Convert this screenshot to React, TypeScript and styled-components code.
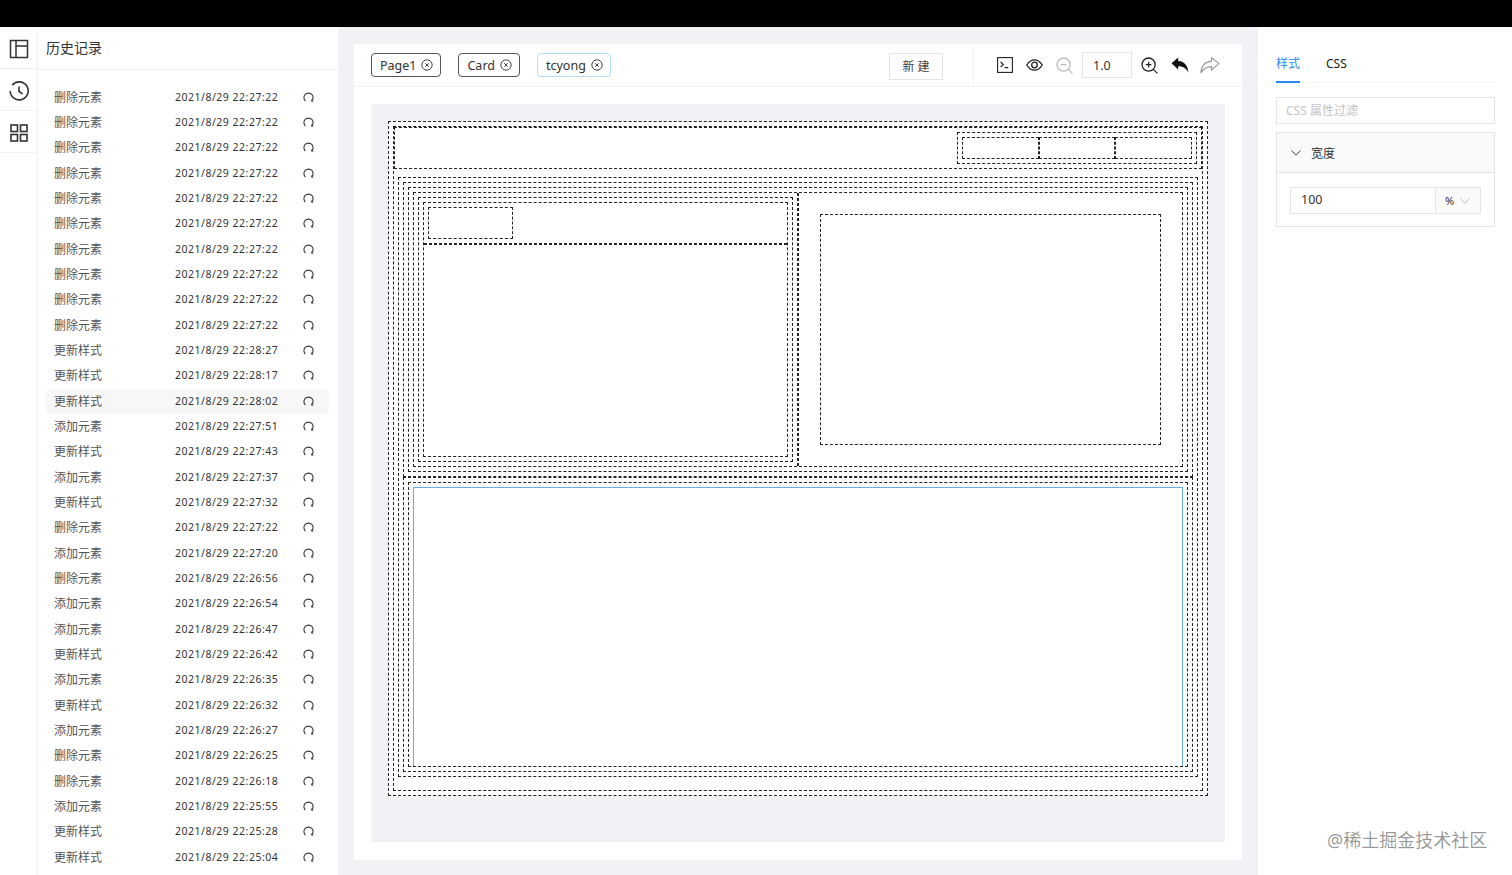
import React from 'react'
import styled, { createGlobalStyle } from 'styled-components'

const history: [string, string][] = [
  ...Array.from({ length: 10 }, (): [string, string] => ['删除元素', '22:27:22']),
  ['更新样式', '22:28:27'],
  ['更新样式', '22:28:17'],
  ['更新样式', '22:28:02'],
  ['添加元素', '22:27:51'],
  ['更新样式', '22:27:43'],
  ['添加元素', '22:27:37'],
  ['更新样式', '22:27:32'],
  ['删除元素', '22:27:22'],
  ['添加元素', '22:27:20'],
  ['删除元素', '22:26:56'],
  ['添加元素', '22:26:54'],
  ['添加元素', '22:26:47'],
  ['更新样式', '22:26:42'],
  ['添加元素', '22:26:35'],
  ['更新样式', '22:26:32'],
  ['添加元素', '22:26:27'],
  ['删除元素', '22:26:25'],
  ['删除元素', '22:26:18'],
  ['添加元素', '22:25:55'],
  ['更新样式', '22:25:28'],
  ['更新样式', '22:25:04'],
]

const LayoutIcon = () => (
  <svg width="20" height="20" viewBox="0 0 20 20" fill="none" stroke="#333" strokeWidth="1.5">
    <rect x="1.5" y="1.5" width="17" height="17" />
    <path d="M7 1.5v17M7 7h11.5" />
  </svg>
)

const ClockIcon = () => (
  <svg width="20" height="20" viewBox="0 0 20 20" fill="none" stroke="#333" strokeWidth="1.6">
    <path d="M3.2 4.2A9 9 0 1 1 1.2 10" />
    <path d="M10 5.5v5l3.6 2.4" />
  </svg>
)

const GridIcon = () => (
  <svg width="18" height="18" viewBox="0 0 18 18" fill="none" stroke="#333" strokeWidth="1.6">
    <rect x="1" y="1" width="6.5" height="6.5" />
    <rect x="10.5" y="1" width="6.5" height="6.5" />
    <rect x="1" y="10.5" width="6.5" height="6.5" />
    <rect x="10.5" y="10.5" width="6.5" height="6.5" />
  </svg>
)

const RestoreIcon = () => (
  <svg width="11" height="12" viewBox="0 0 12 12" fill="none" stroke="#333" strokeWidth="1.2">
    <path d="M2.6 10.4A5 5 0 1 1 9.4 10.4" />
    <path d="M9.5 8.6v2h1.8" strokeWidth="0.9" />
  </svg>
)

const CloseIcon = () => (
  <svg width="12" height="12" viewBox="0 0 13 13" fill="none" stroke="#333" strokeWidth="1">
    <circle cx="6.5" cy="6.5" r="5.6" />
    <path d="M4.6 4.6l3.8 3.8M8.4 4.6l-3.8 3.8" />
  </svg>
)

const TerminalIcon = () => (
  <svg width="16" height="16" viewBox="0 0 16 16" fill="none" stroke="#222" strokeWidth="1.1">
    <rect x="0.6" y="0.6" width="14.8" height="14.8" />
    <path d="M3.6 5l2.8 2.5-2.8 2.5M7.6 10.6h3.6" />
  </svg>
)

const EyeIcon = () => (
  <svg width="17" height="12" viewBox="0 0 17 12" fill="none" stroke="#222" strokeWidth="1.3">
    <path d="M0.8 6C3 2.4 5.6 0.8 8.5 0.8S14 2.4 16.2 6C14 9.6 11.4 11.2 8.5 11.2S3 9.6 0.8 6Z" />
    <circle cx="8.5" cy="6" r="2.8" />
  </svg>
)

const ZoomIcon = ({ plus, color }: { plus?: boolean; color: string }) => (
  <svg width="17" height="17" viewBox="0 0 17 17" fill="none" stroke={color} strokeWidth="1.3">
    <circle cx="7.6" cy="7.6" r="6.6" />
    <path d="M12.4 12.4l4 4M4.8 7.6h5.6" />
    {plus && <path d="M7.6 4.8v5.6" />}
  </svg>
)

const UndoIcon = () => (
  <svg width="18" height="16" viewBox="0 0 18 16" fill="#111">
    <path d="M0.5 6.2L7.2 0.6V4C13 4.2 16.6 8 17.4 15.4C15.2 11.2 12 9.2 7.2 9.2V12.4Z" />
  </svg>
)

const RedoIcon = () => (
  <svg width="20" height="17" viewBox="0 0 20 17" fill="none" stroke="#999" strokeWidth="1.1">
    <path d="M19 6.6L11.6 0.8V4.4C5.4 4.6 1.4 8.6 0.8 16C3.2 11.6 6.6 9.6 11.6 9.6V13Z" />
  </svg>
)

const ChevronIcon = ({ color }: { color: string }) => (
  <svg width="10" height="6" viewBox="0 0 10 6" fill="none" stroke={color} strokeWidth="1">
    <path d="M0.6 0.6L5 5.2L9.4 0.6" />
  </svg>
)

const App = () => {
  return (
    <>
      <GlobalStyle />
      <Page>
        <TopBar />
        <Content>
          <Rail>
            <RailItem><LayoutIcon /></RailItem>
            <RailItem><ClockIcon /></RailItem>
            <RailItem><GridIcon /></RailItem>
          </Rail>
          <HistoryPanel>
            <HistoryTitle>历史记录</HistoryTitle>
            <HistoryList>
              {history.map(([name, time], i) => (
                <HistoryRow key={i} $active={i === 12}>
                  <span>{name}</span>
                  <HistoryTime>2021/8/29 {time}</HistoryTime>
                  <RestoreIcon />
                </HistoryRow>
              ))}
            </HistoryList>
          </HistoryPanel>
          <Main>
            <Editor>
              <Toolbar>
                <PageTab>Page1<CloseIcon /></PageTab>
                <PageTab>Card<CloseIcon /></PageTab>
                <PageTab $active>tcyong<CloseIcon /></PageTab>
                <Spacer />
                <NewButton>新 建</NewButton>
                <ToolGroup>
                  <TerminalIcon />
                  <EyeIcon />
                  <ZoomIcon color="#bbb" />
                  <ScaleInput>1.0</ScaleInput>
                  <ZoomIcon plus color="#222" />
                  <UndoIcon />
                  <RedoSlot><RedoIcon /></RedoSlot>
                </ToolGroup>
              </Toolbar>
              <CanvasArea>
                <OuterFrame>
                  <PageFrame>
                    <HeaderFrame>
                      <HeaderGroup>
                        <HeaderCell />
                        <HeaderCell />
                        <HeaderCell />
                      </HeaderGroup>
                    </HeaderFrame>
                    <BodyFrame>
                      <SectionFrame>
                        <SectionInner>
                          <ColumnRow>
                            <LeftColumn>
                              <CardOuter>
                                <Card>
                                  <CardHead><CardTitle /></CardHead>
                                  <CardBody />
                                </Card>
                              </CardOuter>
                            </LeftColumn>
                            <RightColumn><RightBlock /></RightColumn>
                          </ColumnRow>
                        </SectionInner>
                      </SectionFrame>
                      <SectionFrame>
                        <LastInner><SelectedBlock /></LastInner>
                      </SectionFrame>
                    </BodyFrame>
                  </PageFrame>
                </OuterFrame>
              </CanvasArea>
            </Editor>
          </Main>
          <SidePanel>
            <SideTabs>
              <SideTab $active>样式</SideTab>
              <SideTab>CSS</SideTab>
            </SideTabs>
            <FilterBox>CSS 属性过滤</FilterBox>
            <Collapse>
              <CollapseHead><ChevronIcon color="#444" />宽度</CollapseHead>
              <CollapseBody>
                <ValueField>
                  <ValueText>100</ValueText>
                  <UnitSelect>%<ChevronIcon color="#bbb" /></UnitSelect>
                </ValueField>
              </CollapseBody>
            </Collapse>
          </SidePanel>
        </Content>
        <Watermark>@稀土掘金技术社区</Watermark>
      </Page>
    </>
  )
}

export default App

const GlobalStyle = createGlobalStyle`
  html, body {
    margin: 0;
    padding: 0;
    overflow: hidden;
  }
  * {
    box-sizing: border-box;
  }
`
const Page = styled.div`
  position: relative;
  width: 1512px;
  height: 875px;
  overflow: hidden;
  background-color: #fff;
  font-family: "Noto Sans", "Noto Sans CJK SC", sans-serif;
  color: #333;
`
const TopBar = styled.div`
  height: 27px;
  background-color: #000;
`
const Content = styled.div`
  height: 848px;
  display: flex;
`
const Rail = styled.div`
  width: 38px;
  flex-shrink: 0;
  border-right: 1px solid #f0f0f0;
`
const RailItem = styled.div`
  height: 42px;
  padding-top: 2px;
  display: flex;
  align-items: center;
  justify-content: center;
  border-bottom: 1px solid #f3f3f3;
`
const HistoryPanel = styled.div`
  width: 300px;
  flex-shrink: 0;
  overflow: hidden;
`
const HistoryTitle = styled.div`
  height: 43px;
  padding: 0 0 3px 8px;
  display: flex;
  align-items: center;
  font-size: 14px;
  color: #333;
  border-bottom: 1px solid #f0f0f0;
`
const HistoryList = styled.div`
  padding: 15px 9px 0 8px;
`
const HistoryRow = styled.div<{ $active?: boolean }>`
  height: 25.33px;
  padding: 0 0 2px 8px;
  display: grid;
  grid-template-columns: 121px 128px 11px;
  align-items: center;
  font-size: 12px;
  color: #555;
  border-radius: 4px;
  background-color: ${(p) => (p.$active ? '#f7f7f7' : 'transparent')};
`
const HistoryTime = styled.span`
  font-size: 10.5px;
  letter-spacing: 0.5px;
  color: #333;
`
const Main = styled.div`
  width: 920px;
  flex-shrink: 0;
  padding: 17px 16px 15px;
  background-color: #f0f2f5;
`
const Editor = styled.div`
  height: 100%;
  display: flex;
  flex-direction: column;
  background-color: #fff;
`
const Toolbar = styled.div`
  height: 43px;
  flex-shrink: 0;
  padding: 0 22px 0 17px;
  display: flex;
  align-items: center;
  gap: 17px;
  border-bottom: 1px solid #f0f0f0;
`
const PageTab = styled.div<{ $active?: boolean }>`
  height: 24px;
  padding: 0 7px 0 8px;
  display: flex;
  align-items: center;
  gap: 5px;
  font-size: 12.5px;
  color: #333;
  border-radius: 4px;
  border: 1px solid ${(p) => (p.$active ? '#b5def5' : '#555')};
`
const Spacer = styled.div`
  flex: 1;
`
const NewButton = styled.div`
  width: 54px;
  height: 27px;
  margin-top: 2px;
  display: flex;
  align-items: center;
  justify-content: center;
  font-size: 12px;
  color: #444;
  border: 1px solid #e4e4e4;
`
const ToolGroup = styled.div`
  height: 100%;
  margin-left: 13px;
  padding-left: 23px;
  display: flex;
  align-items: center;
  gap: 13px;
  border-left: 1px solid #f3f3f3;
`
const ScaleInput = styled.div`
  width: 50px;
  height: 26px;
  margin: 0 -4px 0 -4px;
  padding-left: 10px;
  display: flex;
  align-items: center;
  font-size: 12.5px;
  color: #333;
  border: 1px solid #e4e4e4;
`
const RedoSlot = styled.div`
  display: flex;
  margin-left: -2px;
`
const CanvasArea = styled.div`
  height: 738px;
  margin: 17px 17px 0;
  padding: 17px;
  background-color: #f0f2f5;
`
const Dashed = styled.div`
  background-color: #fff;
  border: 1px dashed #222;
`
const OuterFrame = styled(Dashed)`
  width: 820px;
  height: 675px;
  padding: 4px;
`
const PageFrame = styled(Dashed)`
  height: 100%;
`
const HeaderFrame = styled(Dashed)`
  height: 42px;
  padding: 4px;
  display: flex;
  justify-content: flex-end;
`
const HeaderGroup = styled(Dashed)`
  width: 240px;
  padding: 4px;
  display: flex;
`
const HeaderCell = styled(Dashed)`
  flex: 1;
`
const BodyFrame = styled(Dashed)`
  height: 600px;
  margin: 8px 4px 0;
  padding: 4px;
`
const SectionFrame = styled(Dashed)`
  height: 295px;
  padding: 4px;
`
const SectionInner = styled(Dashed)`
  height: 100%;
  padding: 4px;
`
const ColumnRow = styled(Dashed)`
  height: 100%;
  display: flex;
`
const LeftColumn = styled.div`
  flex: 0 0 50%;
  padding: 4px;
  border-right: 1px dashed #222;
`
const CardOuter = styled(Dashed)`
  height: 100%;
  padding: 4px;
`
const Card = styled(Dashed)`
  height: 100%;
  display: flex;
  flex-direction: column;
`
const CardHead = styled.div`
  height: 41px;
  padding: 4px;
  border-bottom: 1px dashed #222;
`
const CardTitle = styled(Dashed)`
  width: 85px;
  height: 32px;
`
const CardBody = styled.div`
  flex: 1;
  border-top: 1px dashed #222;
`
const RightColumn = styled.div`
  flex: 0 0 50%;
  padding: 21px;
  border-left: 1px dashed #222;
`
const RightBlock = styled(Dashed)`
  height: 100%;
`
const LastInner = styled(Dashed)`
  height: 100%;
  padding: 4px 4px 0;
`
const SelectedBlock = styled.div`
  height: 100%;
  background-color: #fff;
  border: 1px solid #6aaee0;
  border-bottom: none;
`
const SidePanel = styled.div`
  flex: 1;
  padding: 0 17px 0 18px;
`
const SideTabs = styled.div`
  height: 56px;
  display: flex;
  gap: 26px;
  border-bottom: 1px solid #f5f5f5;
`
const SideTab = styled.div<{ $active?: boolean }>`
  height: 56px;
  padding-top: 28px;
  font-size: 12px;
  line-height: 18px;
  color: ${(p) => (p.$active ? '#2a8cf0' : '#222')};
  border-bottom: 2px solid ${(p) => (p.$active ? '#2a8cf0' : 'transparent')};
`
const FilterBox = styled.div`
  height: 27px;
  margin-top: 14px;
  padding: 0 0 2px 9px;
  display: flex;
  align-items: center;
  font-size: 12px;
  color: #c4c4c4;
  border: 1px solid #e4e4e4;
`
const Collapse = styled.div`
  height: 95px;
  margin-top: 8px;
  border: 1px solid #e4e4e4;
`
const CollapseHead = styled.div`
  height: 40px;
  padding-left: 14px;
  display: flex;
  align-items: center;
  gap: 10px;
  font-size: 12px;
  color: #333;
  background-color: #fafafa;
  border-bottom: 1px solid #e4e4e4;
`
const CollapseBody = styled.div`
  padding: 14px 13px;
`
const ValueField = styled.div`
  height: 27px;
  display: flex;
  border: 1px solid #e4e4e4;
`
const ValueText = styled.div`
  flex: 1;
  padding: 0 0 2px 10px;
  display: flex;
  align-items: center;
  font-size: 12.5px;
  color: #333;
`
const UnitSelect = styled.div`
  width: 45px;
  padding-left: 9px;
  display: flex;
  align-items: center;
  gap: 6px;
  font-size: 11px;
  color: #333;
  background-color: #fafafa;
  border-left: 1px solid #e4e4e4;
`
const Watermark = styled.div`
  position: absolute;
  left: 1327px;
  top: 827px;
  font-size: 18px;
  line-height: 26px;
  white-space: nowrap;
  color: rgba(0, 0, 0, 0.42);
`
